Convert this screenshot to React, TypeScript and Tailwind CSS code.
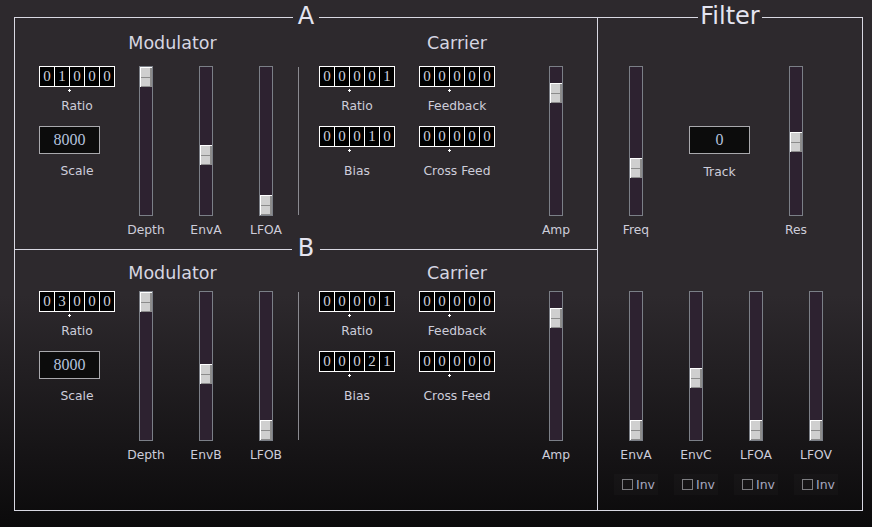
import React from "react";

const LINE = "bg-[#d8d8e2]";

function TitleRow({ title, gap, lift }: { title: string; gap: string; lift?: boolean }) {
  return (
    <div className={`flex h-[25px] items-center ${lift ? "-mt-[12px]" : ""}`}>
      <div className={`h-px flex-1 ${LINE}`} />
      <span className={`${gap} self-start text-[24px] leading-[23px] text-[#e4e4f0]`}>{title}</span>
      <div className={`h-px flex-1 ${LINE}`} />
    </div>
  );
}

function Label({ children, className = "" }: { children: React.ReactNode; className?: string }) {
  return <div className={`text-center text-[12.3px] leading-[15px] text-[#cdcdda] ${className}`}>{children}</div>;
}

// pos = thumb offset from the top of the track, in px (0..128)
function Slider({ pos }: { pos: number }) {
  return (
    <div className="flex h-[150px] w-[14px] flex-col border border-[#7b7f87] bg-[#2d2230]">
      <div
        style={{ marginTop: pos }}
        className="flex h-[20px] w-[12px] flex-col border-l border-t border-white bg-[#8c8c8c]"
      >
        <div className="mr-[2px] h-[9px] bg-[#cfcfcf]" />
        <div className="mr-[2px] h-px bg-[#8c8c8c]" />
        <div className="mr-[2px] h-[8px] bg-[#cfcfcf]" />
      </div>
    </div>
  );
}

function SliderCol({ label, pos, children }: { label: string; pos: number; children?: React.ReactNode }) {
  return (
    <div className="flex w-[60px] flex-col items-center">
      <Slider pos={pos} />
      <Label className="mt-[7px]">{label}</Label>
      {children}
    </div>
  );
}

function Digits({ value }: { value: string }) {
  return (
    <div className="relative flex h-[21px] w-[76px] border border-white bg-black [font-family:'Liberation_Serif',serif] text-[15px] text-[#cfd2dc]">
      {value.split("").map((d, i) => (
        <div
          key={i}
          className={`flex items-center justify-center leading-none ${i === 0 ? "w-[14px]" : "w-[15px] border-l border-white"}`}
        >
          {d}
        </div>
      ))}
      {/* decimal marker */}
      <div className="absolute left-[28px] top-[22px] h-[3px] w-[3px]">
        <div className="absolute left-[1px] top-0 h-[3px] w-px bg-white" />
        <div className="absolute left-0 top-[1px] h-px w-[3px] bg-white" />
      </div>
    </div>
  );
}

function ValueBox({ value, className = "" }: { value: string; className?: string }) {
  return (
    <div
      className={`flex h-[28px] w-[61px] items-center justify-center border border-[#a9a9ad] bg-[#0c0c0c] [font-family:'Liberation_Serif',serif] text-[16px] leading-none text-[#b4c2de] ${className}`}
    >
      {value}
    </div>
  );
}

function CarrierCol({ top, topLabel, bottom, bottomLabel }: { top: string; topLabel: string; bottom: string; bottomLabel: string }) {
  return (
    <div className="flex w-[76px] flex-col">
      <Digits value={top} />
      <Label className="mt-[12px]">{topLabel}</Label>
      <div className="mt-[12px]">
        <Digits value={bottom} />
      </div>
      <Label className="mt-[17px]">{bottomLabel}</Label>
    </div>
  );
}

type Osc = {
  env: string;
  lfo: string;
  modRatio: string;
  carRatio: string;
  feedback: string;
  bias: string;
  crossFeed: string;
  pos: number[];
  headPt: string;
  rowMt: string;
};

function OscSection({ o, className = "" }: { o: Osc; className?: string }) {
  return (
    <div className={`flex flex-col ${className}`}>
      <div className={`flex pl-[24px] text-[17.5px] leading-[20px] text-[#d6d6e2] ${o.headPt}`}>
        <div className="w-[267px] text-center">Modulator</div>
        <div className="ml-[13px] w-[276px] text-center">Carrier</div>
      </div>
      <div className={`flex items-start pl-[24px] ${o.rowMt}`}>
        <div className="flex w-[77px] flex-col">
          <Digits value={o.modRatio} />
          <Label className="mt-[12px] w-[76px]">Ratio</Label>
          <ValueBox value="8000" className="mt-[12px]" />
          <Label className="mt-[10px] w-[76px]">Scale</Label>
        </div>
        <SliderCol label="Depth" pos={o.pos[0]} />
        <SliderCol label={o.env} pos={o.pos[1]} />
        <SliderCol label={o.lfo} pos={o.pos[2]} />
        <div className="ml-[2px] mt-[1px] h-[148px] w-px bg-[#8a8a90]" />
        <div className="ml-[20px] flex gap-[24px]">
          <CarrierCol top={o.carRatio} topLabel="Ratio" bottom={o.bias} bottomLabel="Bias" />
          <CarrierCol top={o.feedback} topLabel="Feedback" bottom={o.crossFeed} bottomLabel="Cross Feed" />
        </div>
        <div className="ml-[31px]">
          <SliderCol label="Amp" pos={o.pos[3]} />
        </div>
      </div>
    </div>
  );
}

const oscA: Osc = {
  env: "EnvA",
  lfo: "LFOA",
  modRatio: "01000",
  carRatio: "00001",
  feedback: "00000",
  bias: "00010",
  crossFeed: "00000",
  pos: [0, 78, 128, 16],
  headPt: "pt-[3px]",
  rowMt: "mt-[13px]",
};

const oscB: Osc = {
  env: "EnvB",
  lfo: "LFOB",
  modRatio: "03000",
  carRatio: "00001",
  feedback: "00000",
  bias: "00021",
  crossFeed: "00000",
  pos: [0, 72, 128, 16],
  headPt: "pt-[1px]",
  rowMt: "mt-[8px]",
};

const mods = [
  { label: "EnvA", pos: 128 },
  { label: "EnvC", pos: 76 },
  { label: "LFOA", pos: 128 },
  { label: "LFOV", pos: 128 },
];

function Inv() {
  return (
    <div className="mt-[11px] flex h-[21px] w-[44px] items-center bg-white/[0.02] pl-[8px]">
      <div className="h-[11px] w-[11px] border border-[#7c7c80]" />
      <span className="ml-[3px] text-[12.5px] leading-[14px] text-[#a8a8c0]">Inv</span>
    </div>
  );
}

export default function App() {
  return (
    <div className="flex h-[527px] w-[872px] items-start overflow-hidden bg-[linear-gradient(180deg,#2d292d_0%,#2d292d_56%,#0b0a0b_100%)] pl-[14px] pt-[17px] [font-family:'DejaVu_Sans',sans-serif]">
      {/* A / B oscillators */}
      <div className="flex h-[494px] w-[583px] flex-col border-b border-l border-[#d8d8e2]">
        <TitleRow title="A" gap="px-[5px]" lift />
        <OscSection o={oscA} className="h-[207px]" />
        <TitleRow title="B" gap="px-[6px]" />
        <OscSection o={oscB} />
      </div>

      {/* Filter */}
      <div className="flex h-[494px] w-[266px] flex-col border-b border-l border-r border-[#d8d8e2]">
        <TitleRow title="Filter" gap="px-[2px]" lift />
        <div className="flex items-start pl-[8px] pt-[36px]">
          <SliderCol label="Freq" pos={91} />
          <div className="ml-[23px] flex w-[61px] flex-col items-center pt-[60px]">
            <ValueBox value="0" />
            <Label className="mt-[11px]">Track</Label>
          </div>
          <div className="ml-[16px]">
            <SliderCol label="Res" pos={65} />
          </div>
        </div>
        <div className="mt-[53px] flex pl-[8px]">
          {mods.map((m) => (
            <SliderCol key={m.label} label={m.label} pos={m.pos}>
              <Inv />
            </SliderCol>
          ))}
        </div>
      </div>
    </div>
  );
}
